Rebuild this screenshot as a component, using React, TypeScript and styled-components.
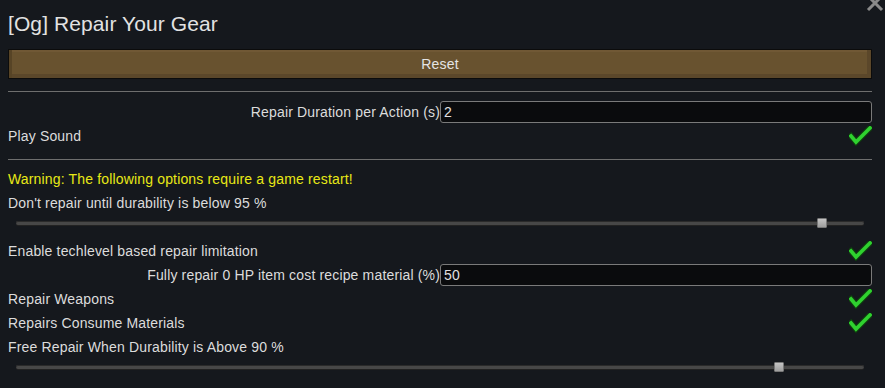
import React from 'react';
import styled, { createGlobalStyle } from 'styled-components';

const GlobalStyle = createGlobalStyle`
  html, body {
    margin: 0;
    padding: 0;
    background: #15181d;
  }
  body {
    font-family: "Liberation Sans", Arial, sans-serif;
    color: #dcdcdc;
  }
`;

const Window = styled.div`
  position: relative;
  width: 885px;
  height: 388px;
  overflow: hidden;
  background: #15181d;
  padding: 0 13px 0 8px;
  box-sizing: border-box;
  letter-spacing: 0.16px;
`;

const Close = styled.svg`
  position: absolute;
  top: -5px;
  right: 0;
`;

const Title = styled.h1`
  margin: 0 0 13px;
  padding-top: 12px;
  font-size: 21px;
  line-height: 24px;
  font-weight: normal;
  letter-spacing: 0.1px;
  color: #e2e2e2;
`;

const ResetButton = styled.button`
  display: block;
  width: 100%;
  height: 30px;
  box-sizing: border-box;
  border: 1px solid #0c0c0c;
  background: #68522f;
  box-shadow: inset 3px 0 0 #574426, inset -4px -4px 0 #5b472a,
    inset 0 2px 0 #705835;
  color: #e4e4e4;
  font: 14px "Liberation Sans", Arial, sans-serif;
  letter-spacing: 0.16px;
  padding: 0;
`;

const Separator = styled.div<{ $top: number; $bottom: number }>`
  height: 1px;
  background: #6e6e6e;
  margin: ${p => p.$top}px 0 ${p => p.$bottom}px;
`;

const Row = styled.div<{ $warn?: boolean }>`
  display: flex;
  align-items: center;
  justify-content: space-between;
  height: 24px;
  font-size: 14px;
  color: ${p => (p.$warn ? '#e8e816' : '#dcdcdc')};
`;

const FieldRow = styled.div`
  display: grid;
  grid-template-columns: 432px 1fr;
  align-items: center;
  height: 24px;
  font-size: 14px;
`;

const FieldLabel = styled.span`
  text-align: right;
`;

const Field = styled.div`
  height: 22px;
  box-sizing: border-box;
  border: 1px solid #7a7a7a;
  border-radius: 3px;
  background: #0a0b0d;
  padding: 0 3px;
  line-height: 20px;
  font-size: 14px;
  color: #e0e0e0;
`;

const SliderRow = styled.div`
  height: 24px;
  padding: 6px 8px 0 8px;
  box-sizing: border-box;
`;

const Track = styled.div`
  position: relative;
  height: 4px;
  border-radius: 2px;
  background: #474747;
  box-shadow: inset 0 1px 0 #2a2a2a, 0 1px 0 #222;
`;

const Thumb = styled.div`
  position: absolute;
  top: -3px;
  width: 10px;
  height: 10px;
  margin-left: -5px;
  box-sizing: border-box;
  border: 1px solid #777;
  border-radius: 1px;
  background: linear-gradient(#c4c4c4, #9e9e9e);
`;

const Check = () => (
  <svg width="23" height="20" viewBox="0 0 23 20">
    <polyline
      points="2,10 7,16 21,2"
      fill="none"
      stroke="#0f3d0f"
      strokeWidth="6"
      strokeLinecap="square"
    />
    <polyline
      points="2,10 7,16 21,2"
      fill="none"
      stroke="#2fd12f"
      strokeWidth="3.6"
      strokeLinecap="square"
    />
  </svg>
);

const Slider = ({ value }: { value: number }) => (
  <SliderRow>
    <Track>
      <Thumb style={{ left: `${value}%` }} />
    </Track>
  </SliderRow>
);

const CheckRow = ({ label }: { label: string }) => (
  <Row>
    <span>{label}</span>
    <Check />
  </Row>
);

const App = () => (
  <>
    <GlobalStyle />
    <Window>
      <Close width="20" height="18" viewBox="0 0 20 18">
        <path d="M3 1 L17 15 M17 1 L3 15" stroke="#8a8a8a" strokeWidth="3" />
      </Close>
      <Title>[Og] Repair Your Gear</Title>
      <ResetButton>Reset</ResetButton>
      <Separator $top={12} $bottom={8} />
      <FieldRow>
        <FieldLabel>Repair Duration per Action (s)</FieldLabel>
        <Field>2</Field>
      </FieldRow>
      <CheckRow label="Play Sound" />
      <Separator $top={11} $bottom={7} />
      <Row $warn>Warning: The following options require a game restart!</Row>
      <Row>Don't repair until durability is below 95 %</Row>
      <Slider value={95} />
      <CheckRow label="Enable techlevel based repair limitation" />
      <FieldRow>
        <FieldLabel>Fully repair 0 HP item cost recipe material (%)</FieldLabel>
        <Field>50</Field>
      </FieldRow>
      <CheckRow label="Repair Weapons" />
      <CheckRow label="Repairs Consume Materials" />
      <Row>Free Repair When Durability is Above 90 %</Row>
      <Slider value={90} />
    </Window>
  </>
);

export default App;
